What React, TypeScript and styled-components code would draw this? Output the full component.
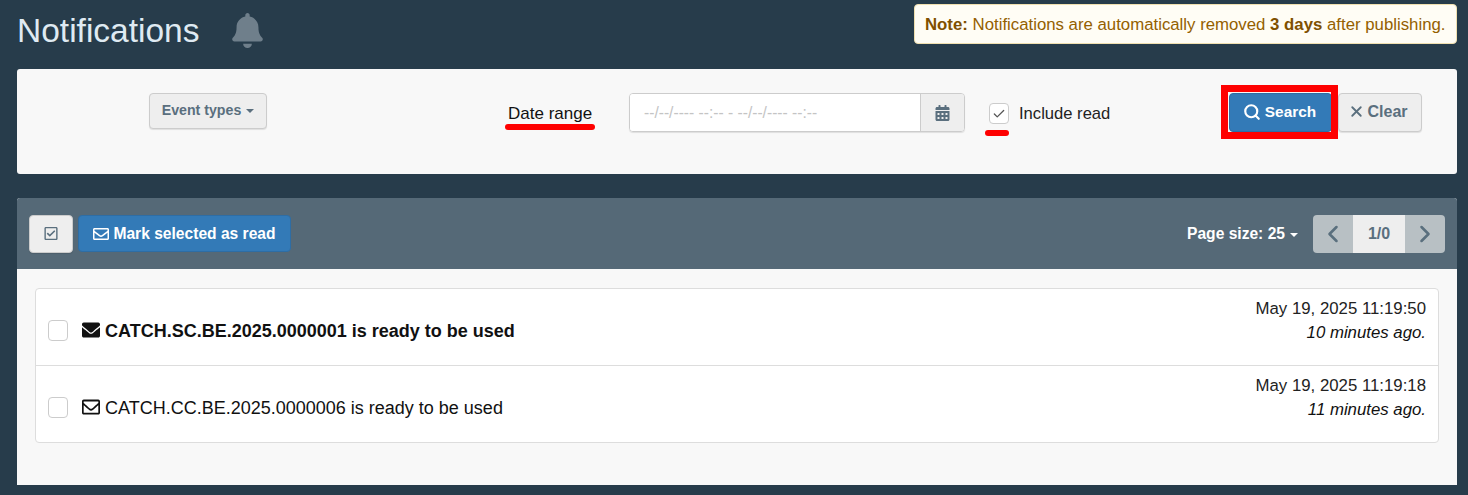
import styled, { createGlobalStyle } from 'styled-components'
import { FaBell, FaCalendarAlt, FaEnvelope, FaRegCheckSquare, FaRegEnvelope } from 'react-icons/fa'
import { Check, ChevronLeft, ChevronRight, Search, X } from 'lucide-react'

const GlobalStyle = createGlobalStyle`
    html, body {
        margin: 0;
        padding: 0;
        background: #273c4b;
        font-family: "Liberation Sans", Arial, sans-serif;
    }
`

const Page = styled.div`
    width: 1468px;
    height: 495px;
    box-sizing: border-box;
    padding: 4px 11px 0 17px;
    overflow: hidden;
`

const Header = styled.div`
    height: 65px;
    display: flex;
    justify-content: space-between;
    align-items: flex-start;
`

const TitleBox = styled.div`
    display: flex;
    align-items: center;
    height: 52px;
    gap: 33px;
`

const Title = styled.h1`
    margin: 2px 0 0;
    color: #dfeaf2;
    font-size: 33.5px;
    font-weight: 400;
    line-height: 52px;
`

const BellIcon = styled(FaBell)`
    width: 31px;
    height: 35px;
    color: #6f7f8b;
`

const Note = styled.div`
    box-sizing: border-box;
    height: 40px;
    width: 543px;
    padding: 1px 10px 0;
    display: flex;
    align-items: center;
    white-space: pre;
    background: #fffdf5;
    border: 1px solid #f0e0b0;
    border-radius: 4px;
    color: #946000;
    font-size: 16.8px;
    b {
        color: #7f5000;
    }
`

const SearchPanel = styled.div`
    height: 105px;
    box-sizing: border-box;
    padding: 24px 35px 0 132px;
    display: flex;
    align-items: flex-start;
    background: #f8f8f8;
    border-radius: 3px;
`

const DefaultBtn = styled.div`
    box-sizing: border-box;
    display: flex;
    align-items: center;
    justify-content: center;
    gap: 4px;
    background: #eeeeee;
    border: 1px solid #cccccc;
    border-radius: 4px;
    box-shadow: 0 1px 1px rgba(0, 0, 0, 0.1);
    color: #5a6f7e;
    font-weight: 700;
`

const EventBtn = styled(DefaultBtn)`
    width: 118px;
    height: 36px;
    padding-bottom: 2px;
    font-size: 14.2px;
`

const Caret = styled.span<{ $color: string }>`
    display: inline-block;
    margin-left: 1px;
    margin-top: 2px;
    border-top: 4px solid ${props => props.$color};
    border-left: 4px solid transparent;
    border-right: 4px solid transparent;
`

const DateField = styled.div`
    position: relative;
    margin-left: 241px;
    width: 84px;
    height: 39px;
    padding-top: 2px;
    box-sizing: border-box;
    display: flex;
    align-items: center;
    color: #111111;
    font-size: 17px;
    white-space: nowrap;
`

const RedStroke = styled.span<{ $left: number; $top: number; $width: number }>`
    position: absolute;
    left: ${props => props.$left}px;
    top: ${props => props.$top}px;
    width: ${props => props.$width}px;
    height: 6px;
    border-radius: 3px;
    background: #fe0000;
`

const InputGroup = styled.div`
    margin-left: 37px;
    width: 336px;
    height: 39px;
    box-sizing: border-box;
    display: flex;
    border: 1px solid #cccccc;
    border-radius: 4px;
    box-shadow: 0 1px 1px rgba(0, 0, 0, 0.1);
    overflow: hidden;
`

const DateInput = styled.div`
    flex: 1;
    display: flex;
    align-items: center;
    padding-left: 14px;
    background: #ffffff;
    color: #c4c4c4;
    font-size: 15.6px;
    white-space: nowrap;
`

const Addon = styled.div`
    width: 44px;
    box-sizing: border-box;
    display: flex;
    align-items: center;
    justify-content: center;
    background: #eeeeee;
    border-left: 1px solid #cccccc;
    color: #5a6f7e;
    svg {
        width: 15px;
        height: 16px;
    }
`

const CheckField = styled.div`
    position: relative;
    margin-left: 24px;
    width: 198px;
    height: 39px;
    padding-top: 2px;
    box-sizing: border-box;
    flex: none;
    display: flex;
    align-items: center;
    gap: 10px;
    color: #222222;
    font-size: 16.6px;
`

const CheckBox = styled.span`
    width: 20px;
    height: 21px;
    box-sizing: border-box;
    flex: none;
    display: flex;
    align-items: center;
    justify-content: center;
    background: #ffffff;
    border: 1px solid #cccccc;
    border-radius: 4px;
    color: #555555;
`

const SearchBtn = styled.div`
    position: relative;
    margin-left: 42px;
    width: 103px;
    height: 39px;
    padding: 0 2px 2px 0;
    flex: none;
    box-sizing: border-box;
    display: flex;
    align-items: center;
    justify-content: center;
    gap: 4px;
    background: #337ab7;
    border: 1px solid #2e6da4;
    border-radius: 4px;
    color: #ffffff;
    font-size: 15.4px;
    font-weight: 700;
`

const RedBox = styled.span`
    position: absolute;
    left: -9px;
    top: -9px;
    width: 117px;
    height: 54px;
    box-sizing: border-box;
    border: 7px solid #fe0000;
`

const ClearBtn = styled(DefaultBtn)`
    width: 84px;
    height: 39px;
    padding: 0 4px 2px 0;
    gap: 2px;
    flex: none;
    margin-left: 6px;
    font-size: 16px;
`

const ResultPanel = styled.div`
    margin-top: 24px;
    height: 287px;
    display: flex;
    flex-direction: column;
    background: #f8f8f8;
    border-radius: 3px 3px 0 0;
`

const Toolbar = styled.div`
    height: 71px;
    box-sizing: border-box;
    padding: 0 12px;
    display: flex;
    align-items: center;
    background: #556977;
    border-radius: 3px 3px 0 0;
`

const SelectAllBtn = styled(DefaultBtn)`
    width: 44px;
    height: 38px;
    svg {
        width: 14px;
        height: 15px;
    }
`

const MarkBtn = styled.div`
    margin-left: 5px;
    width: 213px;
    height: 37px;
    box-sizing: border-box;
    display: flex;
    align-items: center;
    justify-content: center;
    gap: 4px;
    background: #337ab7;
    border: 1px solid #2e6da4;
    border-radius: 4px;
    color: #ffffff;
    font-size: 15.6px;
    font-weight: 700;
    svg {
        width: 16px;
        height: 16px;
    }
`

const PageSize = styled.div`
    margin-left: auto;
    display: flex;
    align-items: center;
    gap: 4px;
    color: #ffffff;
    font-size: 15.6px;
    font-weight: 700;
`

const Pager = styled.div`
    margin-left: 15px;
    height: 38px;
    display: flex;
    border-radius: 4px;
    overflow: hidden;
`

const PagerArrow = styled.div`
    width: 40px;
    display: flex;
    align-items: center;
    justify-content: center;
    background: #b8c0c4;
    color: #5a6f7e;
`

const PagerCurrent = styled.div`
    width: 52px;
    display: flex;
    align-items: center;
    justify-content: center;
    background: #eeeeee;
    color: #5a6f7e;
    font-size: 16px;
    font-weight: 700;
`

const List = styled.div`
    margin: 19px 18px 0;
    background: #ffffff;
    border: 1px solid #dddddd;
    border-radius: 4px;
`

const Row = styled.div`
    height: 76px;
    box-sizing: border-box;
    padding: 0 12px;
    display: flex;
    align-items: center;
    & + & {
        height: 77px;
        border-top: 1px solid #dddddd;
    }
`

const RowCheck = styled.span`
    width: 20px;
    height: 21px;
    box-sizing: border-box;
    margin-top: 7px;
    flex: none;
    background: #ffffff;
    border: 1px solid #cccccc;
    border-radius: 4px;
`

const Subject = styled.div<{ $unread: boolean }>`
    margin-left: 14px;
    margin-top: 9px;
    display: flex;
    align-items: center;
    gap: 5px;
    color: #111111;
    font-size: 18px;
    font-weight: ${props => (props.$unread ? 700 : 400)};
    svg {
        width: 18px;
        height: 20px;
        margin-top: -3px;
    }
`

const When = styled.div`
    margin-left: auto;
    margin-bottom: 12px;
    display: flex;
    flex-direction: column;
    align-items: flex-end;
    color: #222222;
    font-size: 16.8px;
    line-height: 24px;
    em {
        color: #111111;
    }
`

const rows = [
    { id: 'CATCH.SC.BE.2025.0000001', date: 'May 19, 2025 11:19:50', ago: '10 minutes ago.', unread: true },
    { id: 'CATCH.CC.BE.2025.0000006', date: 'May 19, 2025 11:19:18', ago: '11 minutes ago.', unread: false }
]

const App = () => {
    return (
        <Page>
            <GlobalStyle />
            <Header>
                <TitleBox>
                    <Title>Notifications</Title>
                    <BellIcon />
                </TitleBox>
                <Note>
                    <b>Note:</b> Notifications are automatically removed <b>3 days</b> after publishing.
                </Note>
            </Header>

            <SearchPanel>
                <EventBtn>Event types <Caret $color="#5a6f7e" /></EventBtn>
                <DateField>
                    Date range
                    <RedStroke $left={-3} $top={31} $width={90} />
                </DateField>
                <InputGroup>
                    <DateInput>--/--/---- --:-- - --/--/---- --:--</DateInput>
                    <Addon><FaCalendarAlt /></Addon>
                </InputGroup>
                <CheckField>
                    <CheckBox><Check size={14} strokeWidth={2.2} /></CheckBox>
                    Include read
                    <RedStroke $left={-4} $top={37} $width={24} />
                </CheckField>
                <SearchBtn>
                    <Search size={18} strokeWidth={2.9} /> Search
                    <RedBox />
                </SearchBtn>
                <ClearBtn><X size={17} strokeWidth={2.6} /> Clear</ClearBtn>
            </SearchPanel>

            <ResultPanel>
                <Toolbar>
                    <SelectAllBtn><FaRegCheckSquare /></SelectAllBtn>
                    <MarkBtn><FaRegEnvelope /> Mark selected as read</MarkBtn>
                    <PageSize>Page size: 25 <Caret $color="#ffffff" /></PageSize>
                    <Pager>
                        <PagerArrow><ChevronLeft size={28} strokeWidth={2.2} /></PagerArrow>
                        <PagerCurrent>1/0</PagerCurrent>
                        <PagerArrow><ChevronRight size={28} strokeWidth={2.2} /></PagerArrow>
                    </Pager>
                </Toolbar>
                <List>
                    {rows.map(row => (
                        <Row key={row.id}>
                            <RowCheck />
                            <Subject $unread={row.unread}>
                                {row.unread ? <FaEnvelope preserveAspectRatio="none" /> : <FaRegEnvelope preserveAspectRatio="none" />}
                                {row.id} is ready to be used
                            </Subject>
                            <When>
                                <span>{row.date}</span>
                                <em>{row.ago}</em>
                            </When>
                        </Row>
                    ))}
                </List>
            </ResultPanel>
        </Page>
    )
}

export default App
